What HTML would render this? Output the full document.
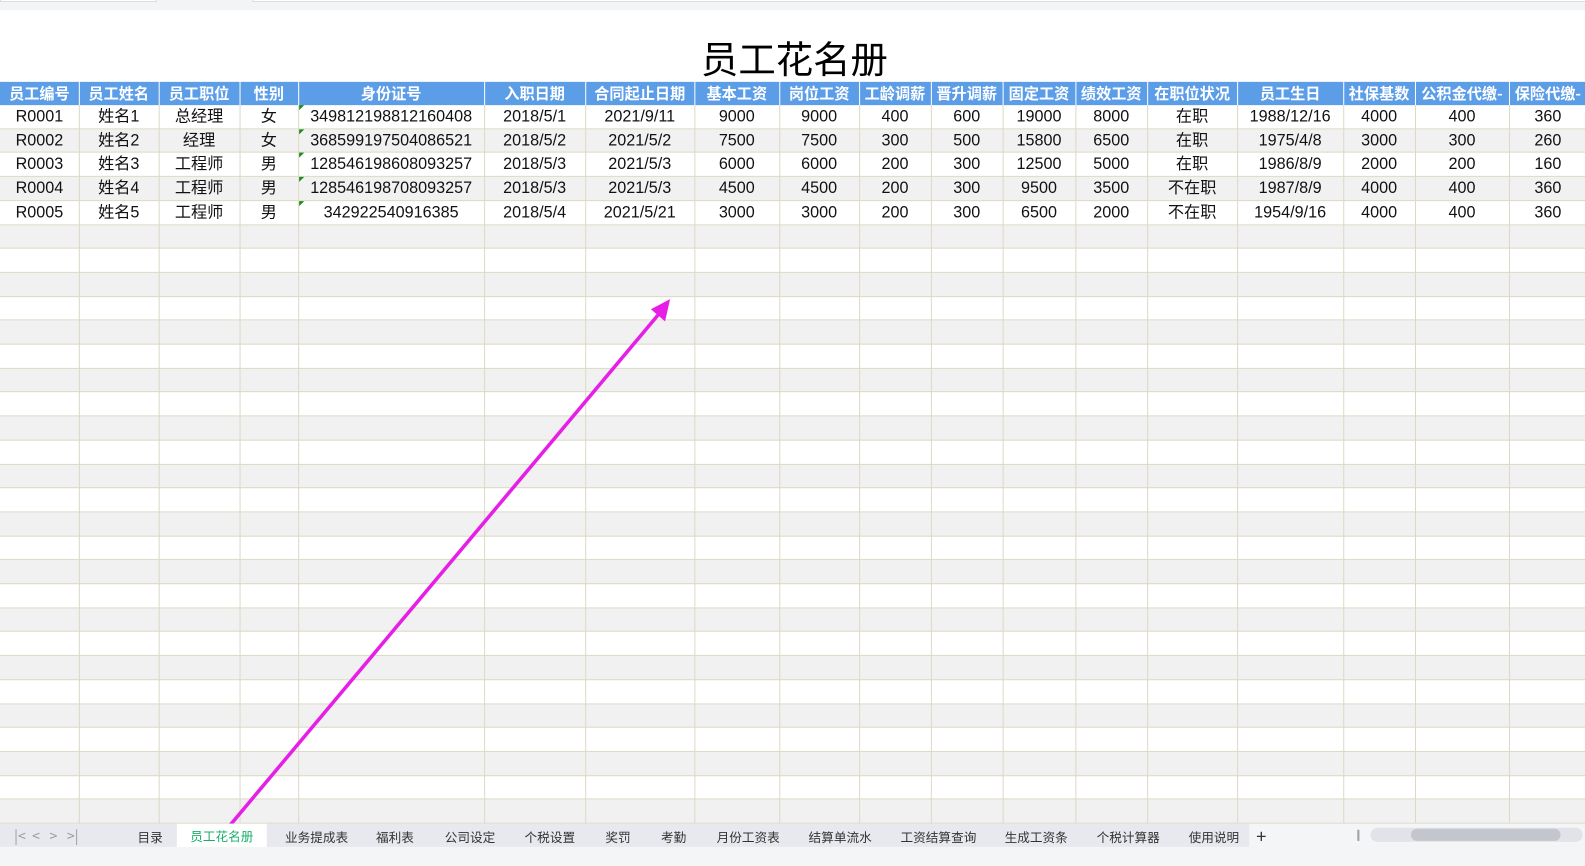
<!DOCTYPE html>
<html><head><meta charset="utf-8"><style>
*{margin:0;padding:0;box-sizing:border-box}
body{width:1585px;height:857px;overflow:hidden;background:#fff;font-family:"Liberation Sans","Noto Sans CJK SC",sans-serif;position:relative}
#w{position:absolute;left:0;top:0;width:1585px;height:857px;transform:scale(1.0107);transform-origin:0 0}
.top{position:absolute;left:0;top:0;width:1585px;height:10px;background:#f3f4f6}
.top i{position:absolute;top:0;height:2px;background:#fff;border:1px solid #dcdde0;border-top:none}
h1{position:absolute;left:686px;width:200px;top:30px;text-align:center;font-size:37px;font-weight:normal;color:#000;font-family:"Noto Sans CJK SC",sans-serif;line-height:52px}
#g div{position:absolute}
.c{text-align:center;font-size:16px;color:#111;white-space:nowrap;overflow:hidden;font-family:"Liberation Sans","Noto Sans CJK SC",sans-serif}
.hc{text-align:center;font-size:15px;color:#fff;font-weight:bold;white-space:nowrap;overflow:hidden;font-family:"Noto Sans CJK SC",sans-serif}
.tri{border-top:5px solid #1a8a1a;border-right:5px solid transparent;width:0;height:0}
.tabs{position:absolute;left:0;top:815px;width:1585px;height:23px;background:#e8e9ee;font-size:12.5px;color:#333;font-family:"Noto Sans CJK SC",sans-serif}
.tabs span{position:absolute;top:3px}
.act{position:absolute;left:175px;top:0;width:89px;height:23px;background:#fff;color:#1aae6c;text-align:center;line-height:23px}
.status{position:absolute;left:0;top:838px;width:1585px;height:19px;background:#f4f5f7}
</style></head><body><div id="w">
<div class="top"><i style="left:0;width:155px"></i><i style="left:250px;width:1335px"></i></div>
<h1>员工花名册</h1>
<div id="g"></div>
<script>
var X=[0,78,157,237,295,479,579,687,771,850,921,992,1064,1135,1224,1329,1400,1493,1570];
var H=["员工编号","员工姓名","员工职位","性别","身份证号","入职日期","合同起止日期","基本工资","岗位工资","工龄调薪","晋升调薪","固定工资","绩效工资","在职位状况","员工生日","社保基数","公积金代缴-","保险代缴-"];
var D=[
["R0001","姓名1","总经理","女","349812198812160408","2018/5/1","2021/9/11","9000","9000","400","600","19000","8000","在职","1988/12/16","4000","400","360"],
["R0002","姓名2","经理","女","368599197504086521","2018/5/2","2021/5/2","7500","7500","300","500","15800","6500","在职","1975/4/8","3000","300","260"],
["R0003","姓名3","工程师","男","128546198608093257","2018/5/3","2021/5/3","6000","6000","200","300","12500","5000","在职","1986/8/9","2000","200","160"],
["R0004","姓名4","工程师","男","128546198708093257","2018/5/3","2021/5/3","4500","4500","200","300","9500","3500","不在职","1987/8/9","4000","400","360"],
["R0005","姓名5","工程师","男","342922540916385","2018/5/4","2021/5/21","3000","3000","200","300","6500","2000","不在职","1954/9/16","4000","400","360"]];
var h='';
var top0=104,rh=23.7,N=30;
for(var r=0;r<N;r++){var y=top0+r*rh;if(r%2==1)h+='<div style="left:0;top:'+y+'px;width:1585px;height:'+rh+'px;background:#f1f1f1"></div>';}
for(var r=0;r<=N;r++){var y=Math.round(top0+r*rh);h+='<div style="left:0;top:'+(y-1)+'px;width:1585px;height:1px;background:#ddd9c6"></div>';}
for(var c=1;c<18;c++){h+='<div style="left:'+X[c]+'px;top:104px;width:1px;height:711px;background:#ddd9c6"></div>';}
h+='<div style="left:0;top:81px;width:1585px;height:23px;background:#5c9de8"></div>';
for(var c=0;c<18;c++){
 if(c>0)h+='<div style="left:'+X[c]+'px;top:81px;width:1px;height:23px;background:#fff"></div>';
 h+='<div class="hc" style="left:'+X[c]+'px;top:81px;width:'+(X[c+1]-X[c])+'px;height:23px;line-height:23px">'+H[c]+'</div>';
}
for(var r=0;r<5;r++){var y=top0+r*rh;
 for(var c=0;c<18;c++){
  h+='<div class="c" style="left:'+X[c]+'px;top:'+y+'px;width:'+(X[c+1]-X[c])+'px;height:'+rh+'px;line-height:'+rh+'px">'+D[r][c]+'</div>';
 }
 h+='<div class="tri" style="left:296px;top:'+Math.round(y)+'px"></div>';
}
document.getElementById('g').innerHTML=h;
</script>
<svg style="position:absolute;left:0;top:0" width="1585" height="857">
<line x1="228" y1="816" x2="655" y2="307" stroke="#e61ee6" stroke-width="3.5"/>
<polygon points="663,296 644,306 658,318" fill="#e61ee6"/>
</svg>
<div class="tabs">
<span style="left:14px;color:#999;font-size:14px;top:2px">|&lt;&nbsp;&nbsp;&lt;&nbsp;&nbsp;&nbsp;&gt;&nbsp;&nbsp;&nbsp;&gt;|</span>
<span style="left:136px">目录</span>
<div class="act">员工花名册</div>
<span style="left:282px">业务提成表</span>
<span style="left:372px">福利表</span>
<span style="left:440px">公司设定</span>
<span style="left:519px">个税设置</span>
<span style="left:599px">奖罚</span>
<span style="left:654px">考勤</span>
<span style="left:709px">月份工资表</span>
<span style="left:800px">结算单流水</span>
<span style="left:891px">工资结算查询</span>
<span style="left:994px">生成工资条</span>
<span style="left:1085px">个税计算器</span>
<span style="left:1176px">使用说明</span>
<div style="position:absolute;left:1236px;top:0;width:349px;height:23px;background:#f4f5f7"></div>
<span style="left:1243px;font-size:18px;top:-1px;color:#333">+</span>
<div style="position:absolute;left:1343px;top:6px;width:2px;height:11px;border-left:1px solid #999;border-right:1px solid #999"></div>
<div style="position:absolute;left:1356px;top:4px;width:210px;height:14px;background:#e2e3e8;border-radius:7px"></div>
<div style="position:absolute;left:1396px;top:5px;width:148px;height:12px;background:#c4c6cd;border-radius:6px"></div>
</div>
<div class="status"></div>
</div></body></html>
